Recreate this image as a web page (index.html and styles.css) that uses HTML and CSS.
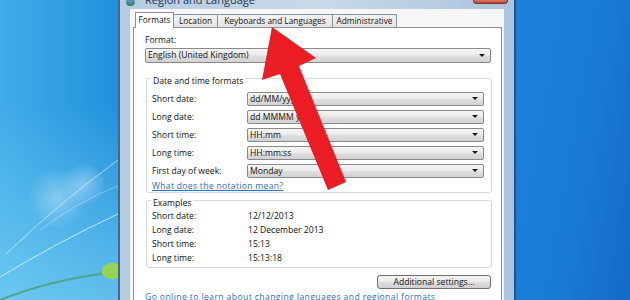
FILE: index.html
```html
<!DOCTYPE html>
<html lang="en">
<head>
    <meta charset="UTF-8">
    <meta name="viewport" content="width=device-width, initial-scale=1.0">
    <title>Region and Language</title>
    <link rel="stylesheet" href="styles.css">
</head>
<body>
    <div class="wall-left">
        <svg width="118" height="300" viewBox="0 0 118 300">
            <defs>
                <radialGradient id="glow" cx="0.5" cy="0.5" r="0.5">
                    <stop offset="0" stop-color="#ffffff" stop-opacity="0.35"/>
                    <stop offset="1" stop-color="#ffffff" stop-opacity="0"/>
                </radialGradient>
            </defs>
            <circle cx="58" cy="198" r="30" fill="url(#glow)"/>
            <circle cx="84" cy="184" r="22" fill="url(#glow)"/>
            <path d="M0 277 Q 58 242 118 214" stroke="#eefaff" stroke-opacity="0.75" stroke-width="1" fill="none"/>
            <path d="M6 254 Q 58 204 118 160" stroke="#eefaff" stroke-opacity="0.6" stroke-width="1" fill="none"/>
            <path d="M40 230 Q 80 200 118 186" stroke="#eefaff" stroke-opacity="0.35" stroke-width="1" fill="none"/>
            <path d="M0 300 Q 50 280 108 273" stroke="#4ea58c" stroke-width="2" fill="none"/>
            <path d="M102 268 q8 -8 16 -4 l0 14 q-9 4 -16 -4z" fill="#97d455"/>
        </svg>
    </div>

    <div class="window">
        <div class="title-bar">
            <span class="title-icon"></span>
            <span class="title-text">Region and Language</span>
            <span class="close-btn"></span>
        </div>

        <div class="client">
            <div class="tabs">
                <div class="tab active tab-formats">Formats</div>
                <div class="tab tab-location">Location</div>
                <div class="tab tab-keyboards">Keyboards and Languages</div>
                <div class="tab tab-admin">Administrative</div>
            </div>

            <div class="tab-page">
                <div class="field-label">Format:</div>
                <div class="combo">English (United Kingdom)</div>

                <div class="group">
                    <div class="group-title">Date and time formats</div>
                    <div class="group-body">
                        <div class="form-row"><span class="row-label">Short date:</span><div class="combo">dd/MM/yyyy</div></div>
                        <div class="form-row"><span class="row-label">Long date:</span><div class="combo">dd MMMM yyyy</div></div>
                        <div class="form-row"><span class="row-label">Short time:</span><div class="combo">HH:mm</div></div>
                        <div class="form-row"><span class="row-label">Long time:</span><div class="combo">HH:mm:ss</div></div>
                        <div class="form-row"><span class="row-label">First day of week:</span><div class="combo">Monday</div></div>
                        <a class="link underline" href="#">What does the notation mean?</a>
                    </div>
                </div>

                <div class="group examples">
                    <div class="group-title">Examples</div>
                    <div class="group-body">
                        <div class="example-row"><span class="row-label">Short date:</span><span class="value">12/12/2013</span></div>
                        <div class="example-row"><span class="row-label">Long date:</span><span class="value">12 December 2013</span></div>
                        <div class="example-row"><span class="row-label">Short time:</span><span class="value">15:13</span></div>
                        <div class="example-row"><span class="row-label">Long time:</span><span class="value">15:13:18</span></div>
                    </div>
                </div>

                <div class="actions">
                    <button class="win-btn">Additional settings...</button>
                </div>
                <a class="link online" href="#">Go online to learn about changing languages and regional formats</a>
            </div>
        </div>
    </div>

    <div class="wall-right"></div>

    <!-- red arrow drawn over the screenshot -->
    <svg class="arrow" width="630" height="300" viewBox="0 0 630 300">
        <polygon points="272,27 316,58 299,66 346,182 328,190 280,74 262,80" fill="#ec1c24"/>
    </svg>
</body>
</html>
```

FILE: styles.css
```css
* {
    margin: 0;
    padding: 0;
    box-sizing: border-box;
}

body {
    width: 630px;
    height: 300px;
    overflow: hidden;
    display: flex;
    position: relative;
    font-family: "Open Sans", "Noto Sans", sans-serif;
    font-size: 8.6px;
    color: #111111;
    background: #1a7ad6;
}

.wall-left {
    width: 118px;
    flex-shrink: 0;
    background:
        linear-gradient(180deg, rgba(130, 214, 246, 0) 35%, rgba(130, 214, 246, 0.65) 100%),
        linear-gradient(90deg, #41ace8, #2191dc);
}

.wall-left svg {
    display: block;
}

.wall-right {
    flex: 1;
    background: linear-gradient(100deg, #1c80da 0%, #1a7bd6 55%, #1569c8 100%);
}

.window {
    width: 398px;
    flex-shrink: 0;
    display: flex;
    flex-direction: column;
    overflow: hidden;
    background: linear-gradient(90deg, #b4cbe0, #c9d9e8 50%, #a9c4de);
    border-left: 2px solid #46698a;
    border-right: 2px solid #22548c;
    padding: 0 10px;
}

.title-bar {
    flex-shrink: 0;
    height: 9px;
    margin: 0 -10px;
    padding: 0 6px;
    display: flex;
    align-items: flex-start;
    overflow: hidden;
}

.title-icon {
    width: 9px;
    height: 6px;
    border-radius: 0 0 4px 4px;
    background: linear-gradient(#5d9ad0, #3b7a3c);
}

.title-text {
    margin: -7px 0 0 10px;
    font-size: 11px;
    line-height: 13px;
    color: #1e3553;
}

.close-btn {
    margin-left: auto;
    width: 35px;
    height: 4px;
    border: 1px solid #7a2f25;
    border-top: none;
    border-radius: 0 0 4px 4px;
    background: linear-gradient(#d97a66, #c4412f);
}

.client {
    flex-shrink: 0;
    display: flex;
    flex-direction: column;
    background: #f6f6f6;
    padding: 3px 2px 0 3px;
}

.tabs {
    display: flex;
    align-items: flex-end;
    height: 15px;
    margin-left: 2px;
    font-size: 8.3px;
}

.tab {
    height: 13px;
    margin-left: -1px;
    line-height: 12px;
    text-align: center;
    border: 1px solid #8d9096;
    border-bottom: none;
    background: linear-gradient(#f4f4f4, #e3e3e3);
    white-space: nowrap;
}

.tab.active {
    height: 16px;
    margin-bottom: -1px;
    margin-left: 0;
    padding-top: 1px;
    background: #ffffff;
    position: relative;
    z-index: 1;
}

.tab-formats { width: 39px; }
.tab-location { width: 45px; }
.tab-keyboards { width: 116px; }
.tab-admin { width: 65px; }

.tab-page {
    background: #ffffff;
    border: 1px solid #8d9096;
    padding: 6px 10px 20px 11px;
}

.field-label {
    line-height: 12px;
}

.combo {
    position: relative;
    height: 15px;
    margin-top: 2px;
    padding-left: 2px;
    line-height: 13px;
    border: 1px solid #8a8a8a;
    border-radius: 2px;
    background: linear-gradient(#f5f5f5 0%, #ececec 45%, #dedede 55%, #d2d2d2 100%);
    white-space: nowrap;
}

.combo::after {
    content: "";
    position: absolute;
    right: 5px;
    top: 5px;
    border-left: 3px solid transparent;
    border-right: 3px solid transparent;
    border-top: 3px solid #1a1a1a;
}

.group {
    margin: 15px -1px 0 1px;
    border: 1px solid #d3dbe2;
    border-radius: 3px;
}

.group-title {
    width: fit-content;
    margin: -4px 0 0 4px;
    padding: 0 2px;
    line-height: 12px;
    background: #ffffff;
}

.group-body {
    padding: 5px 7px 0 5px;
}

.form-row {
    display: flex;
    height: 14px;
    margin-bottom: 4px;
}

.row-label {
    width: 95px;
    flex-shrink: 0;
    line-height: 14px;
}

.form-row .combo {
    flex: 1;
    height: 14px;
    margin-top: 0;
    line-height: 12px;
}

.form-row .combo::after {
    top: 4px;
}

.link {
    display: block;
    line-height: 12px;
    color: #2f6fbf;
    text-decoration: none;
}

.link.underline {
    margin-top: -2px;
    letter-spacing: 0.3px;
    text-decoration: underline;
}

.link.online {
    margin-top: 2px;
    letter-spacing: 0.4px;
    white-space: nowrap;
}

.examples {
    margin-top: 7px;
}

.examples .group-body {
    padding: 0 7px 2px 5px;
}

.example-row {
    display: flex;
    line-height: 14px;
}

.value {
    padding-left: 1px;
}

.actions {
    display: flex;
    justify-content: flex-end;
    margin-top: 7px;
}

.win-btn {
    width: 114px;
    height: 14px;
    font-family: inherit;
    font-size: inherit;
    line-height: 12px;
    color: #111111;
    border: 1px solid #707070;
    border-radius: 3px;
    background: linear-gradient(#f4f4f4 0%, #ebebeb 45%, #dddddd 55%, #cfcfcf 100%);
}

.arrow {
    position: absolute;
    top: 0;
    left: 0;
    pointer-events: none;
}
```
